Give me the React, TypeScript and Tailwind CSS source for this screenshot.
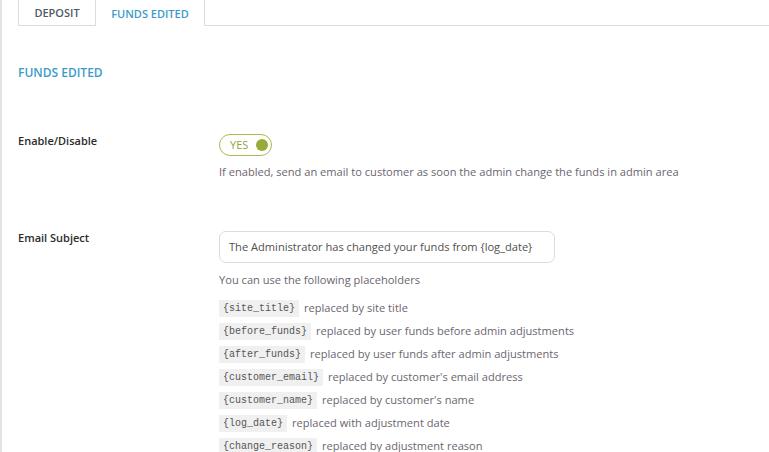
import React from "react";

const placeholders: [string, string][] = [
  ["{site_title}", "replaced by site title"],
  ["{before_funds}", "replaced by user funds before admin adjustments"],
  ["{after_funds}", "replaced by user funds after admin adjustments"],
  ["{customer_email}", "replaced by customer's email address"],
  ["{customer_name}", "replaced by customer's name"],
  ["{log_date}", "replaced with adjustment date"],
  ["{change_reason}", "replaced by adjustment reason"],
];

export default function App() {
  return (
    <div
      className="w-[769px] h-[452px] overflow-hidden bg-white flex"
      style={{ fontFamily: '"Open Sans", "Noto Sans", sans-serif' }}
    >
      <div className="w-[2px] bg-[#e2e2e2] shrink-0" />
      <div className="flex-1 flex flex-col">
        <div className="flex h-[26px] pl-[16px] shrink-0">
          <div className="w-[78px] border-l border-r border-b border-[#dcdcdc] flex items-center justify-center text-[11px] text-[#4e5a68] font-semibold pt-[2px]">
            DEPOSIT
          </div>
          <div className="w-[109px] border-r border-[#dcdcdc] flex items-center justify-center text-[11px] text-[#3b9cc9] font-semibold pt-[2px]">
            FUNDS EDITED
          </div>
          <div className="flex-1 border-b border-[#dcdcdc]" />
        </div>
        <div className="pl-[16px] pt-[39px] text-[12px] leading-[16px] font-semibold text-[#3b9cc9]">
          FUNDS EDITED
        </div>
        <div className="flex pl-[16px] pt-[53px]">
          <div className="w-[201px] text-[11px] leading-[16px] font-semibold text-[#2c2c2c] mt-[-1px]">
            Enable/Disable
          </div>
          <div className="flex flex-col">
            <div className="w-[53px] h-[22px] rounded-full border-[1.5px] border-[#a8bc50] flex items-center justify-between pl-[10px] pr-[3px]">
              <span className="text-[11px] text-[#8fa33a] font-medium">YES</span>
              <span className="w-[12px] h-[12px] rounded-full bg-[#97ab36]" />
            </div>
            <div className="mt-[8px] text-[11.1px] leading-[16px] text-[#6b6570]">
              If enabled, send an email to customer as soon the admin change the funds in admin area
            </div>
          </div>
        </div>
        <div className="flex pl-[16px] pt-[51px]">
          <div className="w-[201px] text-[11px] leading-[16px] font-semibold text-[#2c2c2c] mt-[-1px]">
            Email Subject
          </div>
          <div className="flex flex-col">
            <div className="w-[336px] h-[32px] rounded-[7px] border border-[#dcdcdc] flex items-center pl-[9px] text-[11.1px] text-[#505050] whitespace-nowrap">
              The Administrator has changed your funds from {"{log_date}"}
            </div>
            <div className="mt-[9px] text-[11.1px] leading-[16px] text-[#6b6570]">
              You can use the following placeholders
            </div>
            <div className="mt-[11px] flex flex-col gap-[5px]">
              {placeholders.map(([code, desc]) => (
                <div key={code} className="flex items-center h-[18px]">
                  <code
                    className="bg-[#f0f0f0] text-[#555] text-[10px] px-[4px] h-[17px] flex items-center"
                    style={{ fontFamily: '"Liberation Mono", "DejaVu Sans Mono", monospace' }}
                  >
                    {code}
                  </code>
                  <span className="ml-[5px] text-[11.1px] text-[#6b6570]">{desc}</span>
                </div>
              ))}
            </div>
          </div>
        </div>
      </div>
    </div>
  );
}
